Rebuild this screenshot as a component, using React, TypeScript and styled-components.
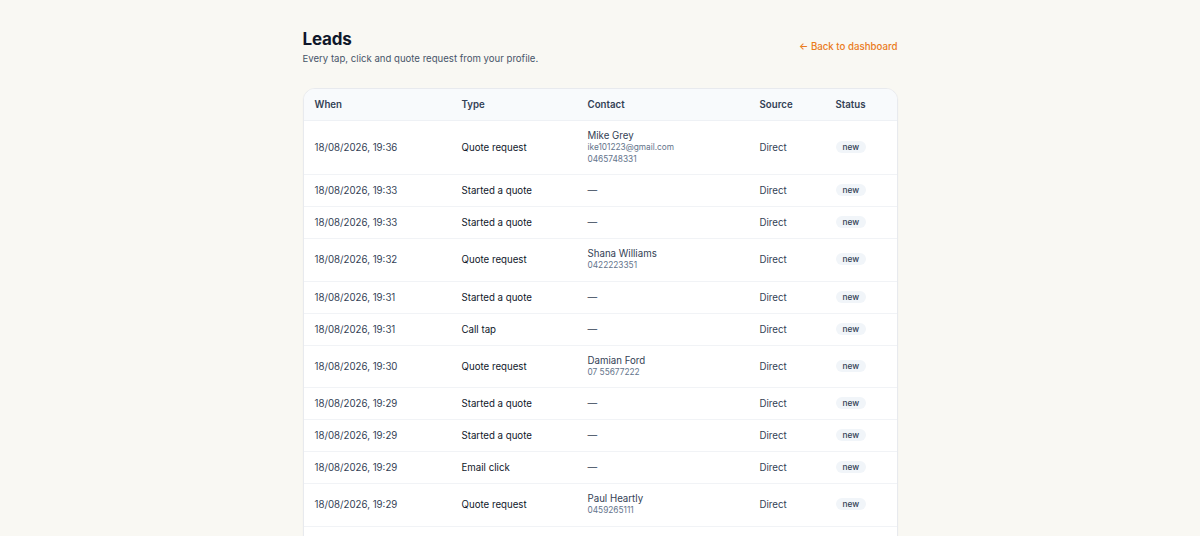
import styled, { createGlobalStyle } from "styled-components";

interface Lead {
  when: string;
  type: string;
  name?: string;
  email?: string;
  phone?: string;
  source: string;
  status: string;
}

const leads: Lead[] = [
  { when: "18/08/2026, 19:36", type: "Quote request", name: "Mike Grey", email: "ike101223@gmail.com", phone: "0465748331", source: "Direct", status: "new" },
  { when: "18/08/2026, 19:33", type: "Started a quote", source: "Direct", status: "new" },
  { when: "18/08/2026, 19:33", type: "Started a quote", source: "Direct", status: "new" },
  { when: "18/08/2026, 19:32", type: "Quote request", name: "Shana Williams", phone: "0422223351", source: "Direct", status: "new" },
  { when: "18/08/2026, 19:31", type: "Started a quote", source: "Direct", status: "new" },
  { when: "18/08/2026, 19:31", type: "Call tap", source: "Direct", status: "new" },
  { when: "18/08/2026, 19:30", type: "Quote request", name: "Damian Ford", phone: "07 55677222", source: "Direct", status: "new" },
  { when: "18/08/2026, 19:29", type: "Started a quote", source: "Direct", status: "new" },
  { when: "18/08/2026, 19:29", type: "Started a quote", source: "Direct", status: "new" },
  { when: "18/08/2026, 19:29", type: "Email click", source: "Direct", status: "new" },
  { when: "18/08/2026, 19:29", type: "Quote request", name: "Paul Heartly", phone: "0459265111", source: "Direct", status: "new" },
  { when: "18/08/2026, 19:28", type: "Started a quote", source: "Direct", status: "new" },
];

const App = () => {
  return (
    <>
      <GlobalStyle />
      <Page>
        <Header>
          <div>
            <Title>Leads</Title>
            <Subtitle>Every tap, click and quote request from your profile.</Subtitle>
          </div>
          <BackLink href="#">← Back to dashboard</BackLink>
        </Header>

        <Card>
          <Table>
            <colgroup>
              <Col $w={147} />
              <Col $w={126} />
              <Col $w={172} />
              <Col $w={76} />
              <Col />
            </colgroup>
            <thead>
              <tr>
                <Th>When</Th>
                <Th>Type</Th>
                <Th>Contact</Th>
                <Th>Source</Th>
                <Th>Status</Th>
              </tr>
            </thead>
            <tbody>
              {leads.map((lead, i) => (
                <Row key={i}>
                  <Td>{lead.when}</Td>
                  <Td $dark>{lead.type}</Td>
                  <Td>
                    {lead.name ? (
                      <>
                        <ContactName>{lead.name}</ContactName>
                        {lead.email && <ContactMeta>{lead.email}</ContactMeta>}
                        {lead.phone && <ContactMeta>{lead.phone}</ContactMeta>}
                      </>
                    ) : (
                      "—"
                    )}
                  </Td>
                  <Td>{lead.source}</Td>
                  <Td>
                    <StatusPill>{lead.status}</StatusPill>
                  </Td>
                </Row>
              ))}
            </tbody>
          </Table>
        </Card>
      </Page>
    </>
  );
};

export default App;

// Styled Components
const GlobalStyle = createGlobalStyle`
  *, *::before, *::after {
    box-sizing: border-box;
  }

  html, body {
    margin: 0;
    padding: 0;
    background: #f9f8f3;
    font-family: Inter, "Liberation Sans", sans-serif;
    color: #0f172a;
  }
`;

const Page = styled.main`
  width: 595px;
  margin: 0 auto;
  padding-top: 28px;
`;

const Header = styled.div`
  display: flex;
  justify-content: space-between;
  align-items: flex-start;
  margin-bottom: 22px;
`;

const Title = styled.h1`
  margin: 0;
  font-size: 17px;
  font-weight: 700;
  letter-spacing: -0.2px;
  color: #0f172a;
  line-height: 22px;
`;

const Subtitle = styled.p`
  margin: 2px 0 0;
  font-size: 9.6px;
  color: #475569;
  line-height: 14px;
`;

const BackLink = styled.a`
  margin-top: 13px;
  font-size: 9.7px;
  font-weight: 500;
  color: #ea7b1c;
  text-decoration: none;
`;

const Card = styled.div`
  background: #ffffff;
  border: 1px solid #e8eaee;
  border-radius: 12px;
  overflow: hidden;
  box-shadow: 0 1px 2px rgba(15, 23, 42, 0.04);
`;

const Table = styled.table`
  width: 100%;
  border-collapse: collapse;
  table-layout: fixed;
`;

const Col = styled.col<{ $w?: number }>`
  width: ${(p) => (p.$w ? `${p.$w}px` : "auto")};
`;

const Th = styled.th`
  text-align: left;
  font-size: 9.7px;
  font-weight: 600;
  color: #334155;
  background: #f8fafc;
  padding: 9px 11px;
  line-height: 13px;
  border-bottom: 1px solid #eef1f5;
`;

const Row = styled.tr`
  & + & td {
    border-top: 1px solid #f1f3f6;
  }
`;

const Td = styled.td<{ $dark?: boolean }>`
  font-size: 9.7px;
  color: ${(p) => (p.$dark ? "#0f172a" : "#334155")};
  padding: 9px 11px;
  height: 31.5px;
  line-height: 13px;
  vertical-align: middle;
`;

const ContactName = styled.div`
  font-size: 9.7px;
  color: #334155;
  line-height: 12px;
`;

const ContactMeta = styled.div`
  font-size: 8.3px;
  color: #64748b;
  line-height: 11.5px;
`;

const StatusPill = styled.span`
  display: inline-block;
  vertical-align: top;
  padding: 1px 7px;
  border-radius: 999px;
  background: #f1f5f9;
  color: #334155;
  font-size: 8.3px;
  font-weight: 500;
  line-height: 10px;
`;
